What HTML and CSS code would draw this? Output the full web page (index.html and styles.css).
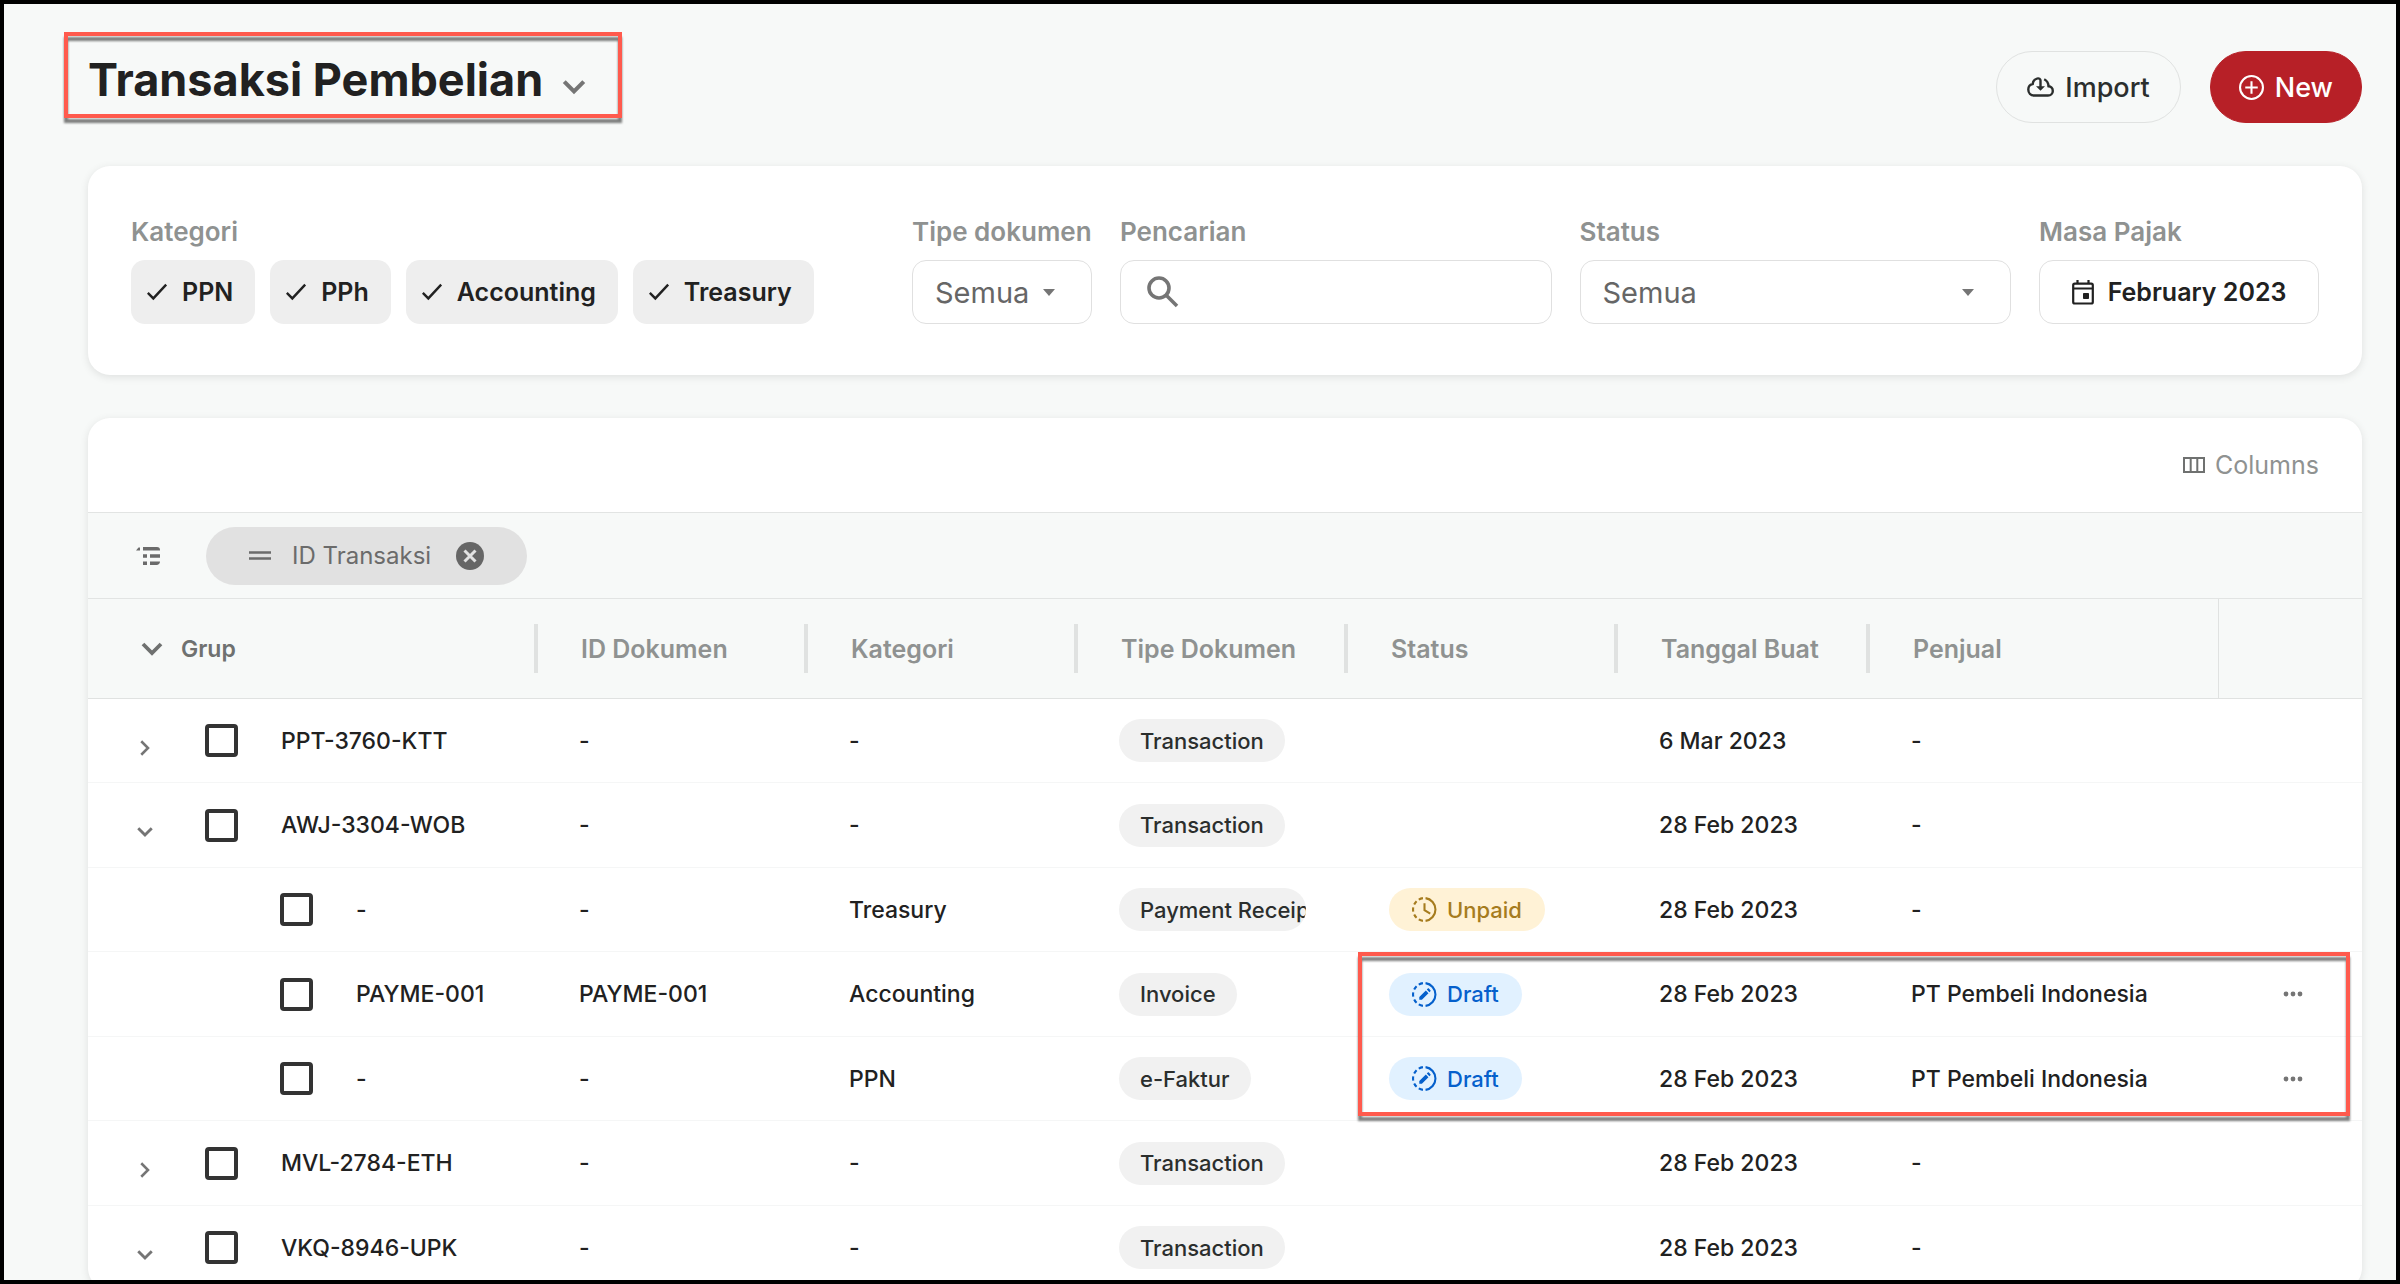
FILE: index.html
```html
<!DOCTYPE html>
<html lang="id">
<head>
  <meta charset="UTF-8">
  <title>Transaksi Pembelian</title>
  <link rel="stylesheet" href="styles.css">
</head>
<body>
  <svg class="sprite" aria-hidden="true">
    <symbol id="chevron-down" viewBox="0 0 24 24"><path d="M3 7l9 9 9-9" fill="none" stroke="currentColor" stroke-width="3.8"/></symbol>
    <symbol id="chevron-right" viewBox="0 0 24 24"><path d="M7 3l9 9-9 9" fill="none" stroke="currentColor" stroke-width="3.4"/></symbol>
    <symbol id="check" viewBox="0 0 24 24"><path d="M2 13l6 6L22 4" fill="none" stroke="currentColor" stroke-width="2.6"/></symbol>
    <symbol id="arrow" viewBox="0 0 14 8"><path d="M1 0h12L7 7z" fill="currentColor"/></symbol>
    <symbol id="dots" viewBox="0 0 20 6"><circle cx="3" cy="3" r="2.4"/><circle cx="10" cy="3" r="2.4"/><circle cx="17" cy="3" r="2.4"/></symbol>
    <symbol id="clock" viewBox="0 0 24 24">
      <g fill="none" stroke="currentColor" stroke-width="2">
        <path d="M13 1.1a11 11 0 0 1 0 21.8"/>
        <path d="M10.5 1.1a11 11 0 0 0-4 1.4M4.4 4a11 11 0 0 0-2.3 3.2M1.2 10a11 11 0 0 0 0 4M2.1 16.8A11 11 0 0 0 4.4 20M6.5 21.5a11 11 0 0 0 4 1.4"/>
        <path d="M12 6v6.6l5.5 3.4"/>
      </g>
    </symbol>
    <symbol id="draft" viewBox="0 0 24 24">
      <g fill="none" stroke="currentColor" stroke-width="2">
        <path d="M13 1.1a11 11 0 0 1 0 21.8"/>
        <path d="M10.5 1.1a11 11 0 0 0-4 1.4M4.4 4a11 11 0 0 0-2.3 3.2M1.2 10a11 11 0 0 0 0 4M2.1 16.8A11 11 0 0 0 4.4 20M6.5 21.5a11 11 0 0 0 4 1.4"/>
      </g>
      <path d="M7 17v-2.5l6.3-6.3 2.5 2.5L9.5 17zM14.2 7.3l1-1c.3-.3.7-.3 1 0l1.5 1.5c.3.3.3.7 0 1l-1 1z" fill="currentColor"/>
    </symbol>
  </svg>

  <div class="page">
    <header class="page-header">
      <div class="title">
        <h1>Transaksi Pembelian</h1>
        <button class="title-toggle" aria-label="Ganti transaksi"><svg width="26" height="26"><use href="#chevron-down"/></svg></button>
      </div>
      <div class="actions">
        <button class="btn">
          <svg width="27" height="20" viewBox="0 0 27 20" fill="none" stroke="currentColor" stroke-width="2.4"><path d="M10 1.6C7.5 2.2 6 4.3 5.7 7 3 7.3 1.3 9.8 1.3 12.5c0 3.5 2.5 6 5.7 6h14c2.8 0 4.8-2 4.8-4.6 0-2.5-1.9-4.5-4.3-4.7C21.4 6 20 3.6 17.2 2.2M10 1.6c2-.8 3.5.4 3.5 1.9v7"/><path d="M9 9.2h9l-4.5 4.6z" fill="currentColor" stroke="none"/></svg>
          Import
        </button>
        <button class="btn btn-primary">
          <svg width="25" height="25" viewBox="0 0 24 24" fill="none" stroke="currentColor" stroke-width="2"><circle cx="12" cy="12" r="11"/><path d="M12 6v12M6 12h12"/></svg>
          New
        </button>
      </div>
      <div class="highlight highlight-title"></div>
    </header>

    <section class="card filters">
      <div class="field">
        <span class="label">Kategori</span>
        <div class="chips">
          <label class="chip"><input type="checkbox" checked><svg width="22" height="22"><use href="#check"/></svg>PPN</label>
          <label class="chip"><input type="checkbox" checked><svg width="22" height="22"><use href="#check"/></svg>PPh</label>
          <label class="chip"><input type="checkbox" checked><svg width="22" height="22"><use href="#check"/></svg>Accounting</label>
          <label class="chip"><input type="checkbox" checked><svg width="22" height="22"><use href="#check"/></svg>Treasury</label>
        </div>
      </div>
      <div class="field">
        <label class="label" for="tipe">Tipe dokumen</label>
        <div class="select">
          <select id="tipe"><option>Semua</option></select>
          <svg width="14" height="8"><use href="#arrow"/></svg>
        </div>
      </div>
      <div class="field">
        <label class="label" for="cari">Pencarian</label>
        <div class="search">
          <svg width="32" height="32" viewBox="0 0 32 32" fill="none" stroke="currentColor" stroke-width="3.6"><circle cx="12" cy="12" r="10"/><path d="M19 19l11 11"/></svg>
          <input id="cari" type="text">
        </div>
      </div>
      <div class="field">
        <label class="label" for="status">Status</label>
        <div class="select">
          <select id="status"><option>Semua</option></select>
          <svg width="14" height="8"><use href="#arrow"/></svg>
        </div>
      </div>
      <div class="field">
        <label class="label" for="masa">Masa Pajak</label>
        <button class="date" id="masa">
          <svg width="22" height="25" viewBox="0 0 22 25" fill="none" stroke="currentColor" stroke-width="2.2"><rect x="1.2" y="3.7" width="19.6" height="19.8" rx="1.5"/><path d="M1 8.5h20M5.5 0v4M16.5 0v4"/><path d="M11.5 13.5h5v5h-5z" fill="currentColor" stroke-width="1"/></svg>
          February 2023
        </button>
      </div>
    </section>

    <section class="card grid">
      <div class="toolbar">
        <button class="columns">
          <svg width="22" height="16" viewBox="0 0 22 16" fill="none" stroke="#6f7170" stroke-width="2"><path d="M1 1h20v14H1zM7.7 1v14M14.3 1v14"/></svg>
          Columns
        </button>
      </div>
      <div class="group-bar">
        <svg width="24" height="18" viewBox="0 0 24 18" fill="currentColor"><path d="M0 3.5L2.5.5H4v3zM7 0h14a3 3 0 0 1 3 3v.5H7zM7 7.3h4v3.5H7zM14 7.3h10v3.5H14zM7 14.5h4V18H7zM14 14.5h10a3.5 3.5 0 0 1-3 3.5h-7z"/></svg>
        <div class="group-chip">
          <svg width="22" height="9" viewBox="0 0 22 9"><path d="M0 1.5h22M0 7.5h22" stroke="currentColor" stroke-width="2.6"/></svg>
          <span>ID Transaksi</span>
          <button aria-label="Hapus grup"><svg width="28" height="28" viewBox="0 0 28 28"><circle cx="14" cy="14" r="14" fill="#666"/><path d="M8.5 8.5l11 11M19.5 8.5l-11 11" stroke="#e1e1e1" stroke-width="3"/></svg></button>
        </div>
      </div>
      <table>
        <colgroup>
          <col class="col-group"><col class="col"><col class="col"><col class="col"><col class="col"><col class="col-date"><col><col class="col-menu">
        </colgroup>
        <thead>
          <tr>
            <th class="group-head"><div><svg width="24" height="24"><use href="#chevron-down"/></svg>Grup</div></th>
            <th>ID Dokumen</th>
            <th>Kategori</th>
            <th>Tipe Dokumen</th>
            <th>Status</th>
            <th>Tanggal Buat</th>
            <th class="last">Penjual</th>
            <th class="menu-head"></th>
          </tr>
        </thead>
        <tbody>
          <tr>
            <td><div class="group"><button class="toggle" aria-label="Buka"><svg width="18" height="18"><use href="#chevron-right"/></svg></button><input type="checkbox" id="r1"><label for="r1">PPT-3760-KTT</label></div></td>
            <td>-</td><td>-</td>
            <td><span class="pill">Transaction</span></td>
            <td></td>
            <td>6 Mar 2023</td><td>-</td><td></td>
          </tr>
          <tr>
            <td><div class="group"><button class="toggle" aria-label="Tutup"><svg width="18" height="18"><use href="#chevron-down"/></svg></button><input type="checkbox" id="r2"><label for="r2">AWJ-3304-WOB</label></div></td>
            <td>-</td><td>-</td>
            <td><span class="pill">Transaction</span></td>
            <td></td>
            <td>28 Feb 2023</td><td>-</td><td></td>
          </tr>
          <tr>
            <td><div class="group child"><input type="checkbox" id="r3"><label for="r3">-</label></div></td>
            <td>-</td><td>Treasury</td>
            <td><span class="pill">Payment Receipt</span></td>
            <td><span class="pill unpaid"><svg width="25" height="25"><use href="#clock"/></svg>Unpaid</span></td>
            <td>28 Feb 2023</td><td>-</td><td></td>
          </tr>
          <tr>
            <td><div class="group child"><input type="checkbox" id="r4"><label for="r4">PAYME-001</label></div></td>
            <td>PAYME-001</td><td>Accounting</td>
            <td><span class="pill">Invoice</span></td>
            <td><span class="pill draft"><svg width="25" height="25"><use href="#draft"/></svg>Draft</span></td>
            <td>28 Feb 2023</td><td>PT Pembeli Indonesia</td>
            <td class="menu"><button aria-label="Menu"><svg width="20" height="6"><use href="#dots"/></svg></button></td>
          </tr>
          <tr>
            <td><div class="group child"><input type="checkbox" id="r5"><label for="r5">-</label></div></td>
            <td>-</td><td>PPN</td>
            <td><span class="pill">e-Faktur</span></td>
            <td><span class="pill draft"><svg width="25" height="25"><use href="#draft"/></svg>Draft</span></td>
            <td>28 Feb 2023</td><td>PT Pembeli Indonesia</td>
            <td class="menu"><button aria-label="Menu"><svg width="20" height="6"><use href="#dots"/></svg></button></td>
          </tr>
          <tr>
            <td><div class="group"><button class="toggle" aria-label="Buka"><svg width="18" height="18"><use href="#chevron-right"/></svg></button><input type="checkbox" id="r6"><label for="r6">MVL-2784-ETH</label></div></td>
            <td>-</td><td>-</td>
            <td><span class="pill">Transaction</span></td>
            <td></td>
            <td>28 Feb 2023</td><td>-</td><td></td>
          </tr>
          <tr>
            <td><div class="group"><button class="toggle" aria-label="Tutup"><svg width="18" height="18"><use href="#chevron-down"/></svg></button><input type="checkbox" id="r7"><label for="r7">VKQ-8946-UPK</label></div></td>
            <td>-</td><td>-</td>
            <td><span class="pill">Transaction</span></td>
            <td></td>
            <td>28 Feb 2023</td><td>-</td><td></td>
          </tr>
        </tbody>
      </table>
      <div class="highlight highlight-rows"></div>
    </section>
  </div>
</body>
</html>
```
FILE: styles.css
```css
* {
  box-sizing: border-box;
}
body {
  margin: 0;
  font-family: Inter, sans-serif;
  font-size: 23px;
  color: #212121;
  background: #f7f9f8;
}
button, input, select {
  font: inherit;
  color: inherit;
}
button {
  display: flex;
  align-items: center;
  padding: 0;
  border: none;
  background: none;
  cursor: pointer;
}
svg {
  flex: none;
  display: block;
}
.sprite {
  position: absolute;
  width: 0;
  height: 0;
}
.page {
  height: 100vh;
  overflow: hidden;
  border: 4px solid #000;
  padding: 47px 34px 0 84px;
}

/* header */
.page-header {
  position: relative;
  display: flex;
  justify-content: space-between;
  margin-bottom: 43px;
}
.title {
  display: flex;
  align-items: flex-start;
  gap: 18px;
}
h1 {
  margin: 0;
  font-size: 45px;
  font-weight: 700;
  line-height: 58px;
}
.title-toggle {
  height: 72px;
  color: #757575;
}
.actions {
  display: flex;
  gap: 29px;
}
.btn {
  height: 72px;
  gap: 11px;
  padding: 0 30px;
  border: 1px solid #e0e2e1;
  border-radius: 36px;
  font-size: 27px;
  font-weight: 500;
  color: #2b2e2d;
}
.btn-primary {
  padding: 0 28px;
  background: #b72027;
  border-color: #b72027;
  color: #fff;
}

/* red frames drawn over the content */
.highlight {
  position: absolute;
  border: 4px solid #ff5a4d;
  filter: drop-shadow(0 5px 1px rgba(0, 0, 0, 0.5));
  pointer-events: none;
}
.highlight-title {
  left: -24px;
  top: -19px;
  width: 558px;
  height: 86px;
}
.highlight-rows {
  left: 1270px;
  right: 12px;
  top: 534px;
  height: 164px;
}

/* cards */
.card {
  background: #fff;
  border-radius: 22px;
  box-shadow: 0 2px 8px rgba(0, 0, 0, 0.1);
}
.filters {
  display: grid;
  grid-template-columns: 753px 180px 1fr 1fr 280px;
  gap: 28px;
  padding: 50px 43px 51px;
  margin-bottom: 43px;
}
.field {
  display: flex;
  flex-direction: column;
  gap: 12px;
  min-width: 0;
}
.label {
  font-size: 26px;
  font-weight: 600;
  line-height: 32px;
  color: #8f9291;
  white-space: nowrap;
}
.chips {
  display: flex;
  gap: 15px;
}
.chip {
  position: relative;
  display: flex;
  align-items: center;
  gap: 14px;
  height: 64px;
  padding: 0 22px 0 15px;
  border-radius: 14px;
  background: #eee;
  font-size: 25px;
  font-weight: 600;
  cursor: pointer;
}
.chip input {
  position: absolute;
  opacity: 0;
}
.select {
  position: relative;
}
.select select {
  width: 100%;
  height: 64px;
  padding: 0 22px;
  border: 1px solid #e0e0e0;
  border-radius: 14px;
  background: #fff;
  font-size: 29px;
  color: #666;
  appearance: none;
}
.select svg {
  position: absolute;
  right: 36px;
  top: 29px;
  color: #757575;
}
.search {
  display: flex;
  align-items: center;
  gap: 16px;
  height: 64px;
  padding: 0 26px;
  border: 1px solid #e0e0e0;
  border-radius: 14px;
  color: #757575;
}
.search input {
  flex: 1;
  min-width: 0;
  border: none;
  outline: none;
  background: none;
}
.date {
  justify-content: center;
  gap: 14px;
  height: 64px;
  border: 1px solid #e0e0e0;
  border-radius: 14px;
  font-size: 25px;
  font-weight: 600;
}

/* grid */
.grid {
  position: relative;
}
.toolbar {
  display: flex;
  justify-content: flex-end;
  height: 95px;
  padding: 0 43px;
  border-bottom: 1px solid #e2e4e3;
}
.columns {
  gap: 10px;
  font-size: 25px;
  color: #8f9291;
}
.group-bar {
  display: flex;
  align-items: center;
  gap: 46px;
  height: 86px;
  padding: 0 48px;
  border-bottom: 1px solid #e2e4e3;
  background: #f7f9f8;
  color: #6b6b6b;
}
.group-chip {
  display: flex;
  align-items: center;
  gap: 21px;
  height: 58px;
  padding: 0 43px;
  border-radius: 29px;
  background: #e1e1e1;
  font-size: 24px;
}
.group-chip button {
  margin-left: 4px;
}
table {
  width: 100%;
  table-layout: fixed;
  border-collapse: separate;
  border-spacing: 0;
}
.col-group {
  width: 450px;
}
.col {
  width: 270px;
}
.col-date {
  width: 252px;
}
.col-menu {
  width: 143px;
}
th {
  height: 100px;
  padding: 0 8px 0 43px;
  border-bottom: 1px solid #e0e2e1;
  background: linear-gradient(#e0e2e1, #e0e2e1) no-repeat right center / 4px 49px #f7f9f8;
  font-size: 25px;
  font-weight: 600;
  text-align: left;
  color: #8f9291;
  white-space: nowrap;
}
.group-head {
  padding-left: 52px;
  font-size: 23px;
  color: #6f7170;
}
.group-head div {
  display: flex;
  align-items: center;
  gap: 17px;
}
.last {
  background: #f7f9f8;
  border-right: 1px solid #e0e2e1;
}
.menu-head {
  background: #f7f9f8;
}
td {
  height: 84px;
  padding: 0 42px 0 41px;
  border-bottom: 1px solid #f5f6f6;
  font-weight: 500;
  white-space: nowrap;
}
tr:nth-child(even) td {
  height: 85px;
}
td:first-child {
  padding-left: 44px;
}
.group {
  display: flex;
  align-items: center;
  gap: 43px;
}
.child {
  padding-left: 148px;
}
.toggle {
  width: 30px;
  padding: 14px 0 0 4px;
  color: #757575;
}
.group input {
  flex: none;
  width: 33px;
  height: 33px;
  margin: 0;
  border: 4px solid #333;
  border-radius: 4px;
  appearance: none;
}
.pill {
  display: inline-flex;
  align-items: center;
  gap: 10px;
  max-width: 100%;
  height: 43px;
  padding: 0 21px;
  border-radius: 22px;
  background: #f1f1f1;
  overflow: hidden;
  font-size: 22px;
  color: #2b2e2d;
  vertical-align: middle;
}
.unpaid, .draft {
  padding: 0 23px;
}
.unpaid {
  background: #fff2d6;
  color: #a67c1e;
}
.draft {
  background: #e1f1ff;
  color: #0560cc;
}
.menu button {
  margin-left: 23px;
}
.menu svg {
  fill: #757575;
}
```
